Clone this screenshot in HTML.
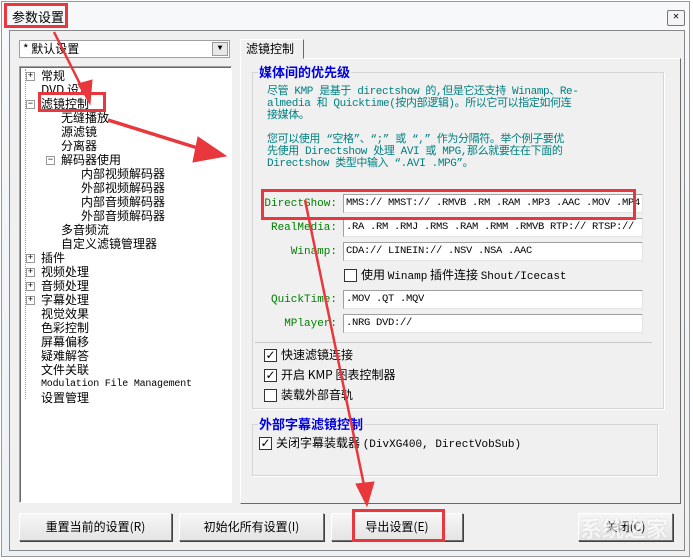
<!DOCTYPE html>
<html><head><meta charset="utf-8"><style>
*{margin:0;padding:0;box-sizing:border-box}
body{width:693px;height:560px;background:#fff;position:relative;overflow:hidden;font-family:"Liberation Mono","Noto Sans CJK SC",monospace;font-size:12px;color:#000}
.abs{position:absolute}
.frame{left:1px;top:1px;width:689px;height:556px;border:1px solid #999;background:linear-gradient(#f6f8fa,#eef1f4)}
.body{left:9px;top:30px;width:676px;height:521px;background:#f0f0f0;border:1px solid #888}
.sunk{border:1px solid;border-color:#a0a0a0 #fff #fff #a0a0a0;box-shadow:inset 1px 1px 0 #696969}
.tree{left:19px;top:66px;width:213px;height:437px;background:#fff}
.tree div{position:absolute;white-space:nowrap;font-family:"Noto Sans CJK SC",sans-serif;font-size:12px;line-height:14px}
.pm{position:absolute;width:9px;height:9px;border:1px solid #999;background:#fff;font-size:9px;line-height:7px;text-align:center;color:#000}
.pane{left:240px;top:58px;width:441px;height:446px;border:1px solid;border-color:#fff #696969 #696969 #fff;background:#f0f0f0}
.grp{border:1px solid #d5d5d5;box-shadow:1px 1px 0 #fff}
.gt{position:absolute;background:#f0f0f0;color:#0000e0;font-weight:bold;font-family:"Noto Sans CJK SC",sans-serif;font-size:13px;line-height:16px;padding:0 1px}
.p{color:#008080;font-size:11px;line-height:12px;white-space:nowrap;letter-spacing:-0.4px}
.lab{color:#008000;text-align:right;width:90px;font-size:11px;left:247px}
.fld{left:343px;width:300px;height:19px;background:#fff;border:1px solid;border-color:#a0a0a0 #e3e3e3 #e3e3e3 #a0a0a0;padding:2px 2px;font-size:10.5px;letter-spacing:-0.3px;line-height:13px;white-space:nowrap;overflow:hidden}
.cb{width:13px;height:13px;border:1px solid #333;background:#fff;font-size:12px;line-height:11px;text-align:center;font-family:"DejaVu Sans",sans-serif}
.ct{font-family:"Noto Sans CJK SC",sans-serif;font-size:12px;line-height:14px;white-space:nowrap}
.btn{top:513px;height:28px;background:linear-gradient(#f6f6f6,#e4e4e4);border:1px solid;border-color:#fff #707070 #707070 #fff;box-shadow:1px 1px 0 #404040;text-align:center;line-height:26px;font-family:"Noto Sans CJK SC",sans-serif;font-size:12px}
.red{border:3px solid #e8383d}
</style></head><body>
<div class="abs frame"></div>
<div class="abs" style="left:12px;top:7px;font-family:'Noto Sans CJK SC',sans-serif;font-size:13px">参数设置</div>
<div class="abs" style="left:667px;top:10px;width:18px;height:16px;border:1px solid #777;border-radius:2px;background:#f4f4f4;font-size:10px;line-height:14px;text-align:center">✕</div>
<div class="abs body"></div>
<div class="abs" style="left:19px;top:40px;width:211px;height:18px;background:#fff;border:1px solid #a0a0a0;font-family:'Noto Sans CJK SC',sans-serif;font-size:12px;line-height:16px;padding-left:3px">* 默认设置</div>
<div class="abs" style="left:212px;top:42px;width:16px;height:14px;background:#e8e8e8;border:1px solid #999;font-size:8px;text-align:center;line-height:12px">▼</div>
<div class="abs tree sunk">
<div style="left:5px;top:2px;width:1px;height:330px;border-left:1px dotted #999"></div>
<span class="pm" style="left:6px;top:5px">+</span><div style="left:21px;top:2px">常规</div>
<div style="left:21px;top:16px">DVD 设置</div>
<span class="pm" style="left:6px;top:33px">−</span><div style="left:21px;top:30px">滤镜控制</div>
<div style="left:41px;top:44px">无缝播放</div>
<div style="left:41px;top:58px">源滤镜</div>
<div style="left:41px;top:72px">分离器</div>
<span class="pm" style="left:26px;top:89px">−</span><div style="left:41px;top:86px">解码器使用</div>
<div style="left:61px;top:100px">内部视频解码器</div>
<div style="left:61px;top:114px">外部视频解码器</div>
<div style="left:61px;top:128px">内部音频解码器</div>
<div style="left:61px;top:142px">外部音频解码器</div>
<div style="left:41px;top:156px">多音频流</div>
<div style="left:41px;top:170px">自定义滤镜管理器</div>
<span class="pm" style="left:6px;top:187px">+</span><div style="left:21px;top:184px">插件</div>
<span class="pm" style="left:6px;top:201px">+</span><div style="left:21px;top:198px">视频处理</div>
<span class="pm" style="left:6px;top:215px">+</span><div style="left:21px;top:212px">音频处理</div>
<span class="pm" style="left:6px;top:229px">+</span><div style="left:21px;top:226px">字幕处理</div>
<div style="left:21px;top:240px">视觉效果</div>
<div style="left:21px;top:254px">色彩控制</div>
<div style="left:21px;top:268px">屏幕偏移</div>
<div style="left:21px;top:282px">疑难解答</div>
<div style="left:21px;top:296px">文件关联</div>
<div style="left:21px;top:311px;font-family:'Liberation Mono',monospace;font-size:10px;letter-spacing:-0.2px">Modulation File Management</div>
<div style="left:21px;top:324px">设置管理</div>
</div>
<div class="abs pane"></div>
<div class="abs" style="left:240px;top:39px;width:64px;height:20px;background:#f0f0f0;border:1px solid;border-color:#fff #696969 #f0f0f0 #fff;font-family:'Noto Sans CJK SC',sans-serif;font-size:12px;line-height:18px;padding-left:5px">滤镜控制</div>
<div class="abs grp" style="left:252px;top:72px;width:412px;height:337px"></div>
<div class="gt" style="left:258px;top:64px">媒体间的优先级</div>
<div class="abs p" style="left:267px;top:86px">尽管 KMP 是基于 directshow 的,但是它还支持 Winamp、Re-</div>
<div class="abs p" style="left:267px;top:98px">almedia 和 Quicktime(按内部逻辑)。所以它可以指定如何连</div>
<div class="abs p" style="left:267px;top:110px">接媒体。</div>
<div class="abs p" style="left:267px;top:134px">您可以使用 “空格”、“;” 或 “,” 作为分隔符。举个例子要优</div>
<div class="abs p" style="left:267px;top:146px">先使用 Directshow 处理 AVI 或 MPG,那么就要在在下面的</div>
<div class="abs p" style="left:267px;top:158px">Directshow 类型中输入 “.AVI .MPG”。</div>
<div class="abs lab" style="top:198px">DirectShow:</div>
<div class="abs fld" style="top:194px">MMS:// MMST:// .RMVB .RM .RAM .MP3 .AAC .MOV .MP4</div>
<div class="abs lab" style="top:222px">RealMedia:</div>
<div class="abs fld" style="top:218px">.RA .RM .RMJ .RMS .RAM .RMM .RMVB RTP:// RTSP://</div>
<div class="abs lab" style="top:246px">Winamp:</div>
<div class="abs fld" style="top:242px">CDA:// LINEIN:// .NSV .NSA .AAC</div>
<div class="abs cb" style="left:344px;top:269px"></div>
<div class="abs ct" style="left:361px;top:268px">使用 <span style="font-family:'Liberation Mono';font-size:11px">Winamp</span> 插件连接 <span style="font-family:'Liberation Mono';font-size:11px">Shout/Icecast</span></div>
<div class="abs lab" style="top:294px">QuickTime:</div>
<div class="abs fld" style="top:290px">.MOV .QT .MQV</div>
<div class="abs lab" style="top:318px">MPlayer:</div>
<div class="abs fld" style="top:314px">.NRG DVD://</div>
<div class="abs" style="left:255px;top:342px;width:397px;height:1px;background:#c8c8c8"></div>
<div class="abs cb" style="left:264px;top:349px">✓</div><div class="abs ct" style="left:281px;top:348px">快速滤镜连接</div>
<div class="abs cb" style="left:264px;top:369px">✓</div><div class="abs ct" style="left:281px;top:368px">开启 KMP 图表控制器</div>
<div class="abs cb" style="left:264px;top:389px"></div><div class="abs ct" style="left:281px;top:388px">装载外部音轨</div>
<div class="abs grp" style="left:252px;top:424px;width:406px;height:52px"></div>
<div class="gt" style="left:258px;top:416px">外部字幕滤镜控制</div>
<div class="abs cb" style="left:259px;top:437px">✓</div><div class="abs ct" style="left:276px;top:436px">关闭字幕装载器 <span style="font-family:'Liberation Mono';font-size:11px">(DivXG400, DirectVobSub)</span></div>
<div class="abs btn" style="left:19px;width:153px">重置当前的设置(R)</div>
<div class="abs btn" style="left:179px;width:145px">初始化所有设置(I)</div>
<div class="abs btn" style="left:331px;width:132px">导出设置(E)</div>
<div class="abs btn" style="left:578px;width:95px">关闭(C)</div>
<div class="abs red" style="left:4px;top:3px;width:64px;height:25px"></div>
<div class="abs red" style="left:38px;top:92px;width:68px;height:20px"></div>
<div class="abs red" style="left:261px;top:189px;width:375px;height:31px"></div>
<div class="abs red" style="left:352px;top:509px;width:93px;height:33px"></div>
<svg class="abs" style="left:0;top:0" width="693" height="560">
<g fill="#e8383d" stroke="#e8383d">
<line x1="54" y1="32" x2="84" y2="92" stroke-width="2.5"/>
<polygon points="78,84 92,80 90,104" />
<line x1="108" y1="120" x2="204" y2="150" stroke-width="3.5"/>
<polygon points="198,137 226,156 193,162"/>
<line x1="305" y1="200" x2="365" y2="490" stroke-width="2.5"/>
<polygon points="356,484 374,482 367,506"/>
</g>
</svg>
<div class="abs" style="left:580px;top:512px;color:#fff;font-family:'Noto Sans CJK SC',sans-serif;font-size:22px;font-weight:bold;opacity:.6;text-shadow:0 0 2px #bbb">系统之家</div>
</body></html>
